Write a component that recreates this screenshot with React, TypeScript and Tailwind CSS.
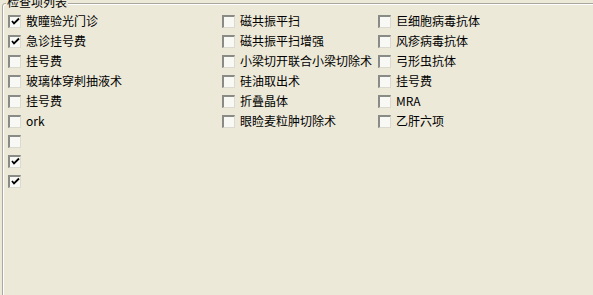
import React from 'react';

interface Item {
  label: string;
  checked?: boolean;
}

const col1: Item[] = [
  { label: '散瞳验光门诊', checked: true },
  { label: '急诊挂号费', checked: true },
  { label: '挂号费' },
  { label: '玻璃体穿刺抽液术' },
  { label: '挂号费' },
  { label: 'ork' },
  { label: '' },
  { label: '', checked: true },
  { label: '', checked: true },
];

const col2: Item[] = [
  { label: '磁共振平扫' },
  { label: '磁共振平扫增强' },
  { label: '小梁切开联合小梁切除术' },
  { label: '硅油取出术' },
  { label: '折叠晶体' },
  { label: '眼睑麦粒肿切除术' },
];

const col3: Item[] = [
  { label: '巨细胞病毒抗体' },
  { label: '风疹病毒抗体' },
  { label: '弓形虫抗体' },
  { label: '挂号费' },
  { label: 'MRA' },
  { label: '乙肝六项' },
];

function Check({ item }: { item: Item }) {
  return (
    <div className="flex items-center h-5">
      <div className="w-[13px] h-[13px] shrink-0 border-t-2 border-l-2 border-t-[#8a8a86] border-l-[#8a8a86] border-r border-b border-r-[#dcdad0] border-b-[#dcdad0] bg-[#f8f8f4] flex items-center justify-center">
        {item.checked && (
          <svg width="9" height="9" viewBox="0 0 9 9">
            <path d="M1 4 L3 6.5 L8 1.5" stroke="#000" strokeWidth="1.8" fill="none" />
          </svg>
        )}
      </div>
      {item.label && <span className="ml-[5px] text-[12px] leading-none text-black whitespace-nowrap">{item.label}</span>}
    </div>
  );
}

export default function App() {
  return (
    <div
      className="w-[593px] h-[295px] bg-[#ece9d8] overflow-hidden relative"
      style={{ fontFamily: '"Noto Sans CJK SC", "Liberation Sans", sans-serif' }}
    >
      <div className="absolute left-[2px] top-[3px] w-[620px] h-[320px] border border-[#a9a89f] rounded-[3px] shadow-[inset_1px_1px_0_#ffffff,1px_1px_0_#ffffff]" />
      <div className="absolute left-[6px] top-[-6px] px-[1px] bg-[#ece9d8] text-[12px] leading-[16px] text-black">检查项列表</div>
      <div className="relative flex pt-[11px]">
        <div className="flex flex-col pl-[8px] w-[222px]">
          {col1.map((it, i) => <Check key={i} item={it} />)}
        </div>
        <div className="flex flex-col w-[156px]">
          {col2.map((it, i) => <Check key={i} item={it} />)}
        </div>
        <div className="flex flex-col">
          {col3.map((it, i) => <Check key={i} item={it} />)}
        </div>
      </div>
    </div>
  );
}
